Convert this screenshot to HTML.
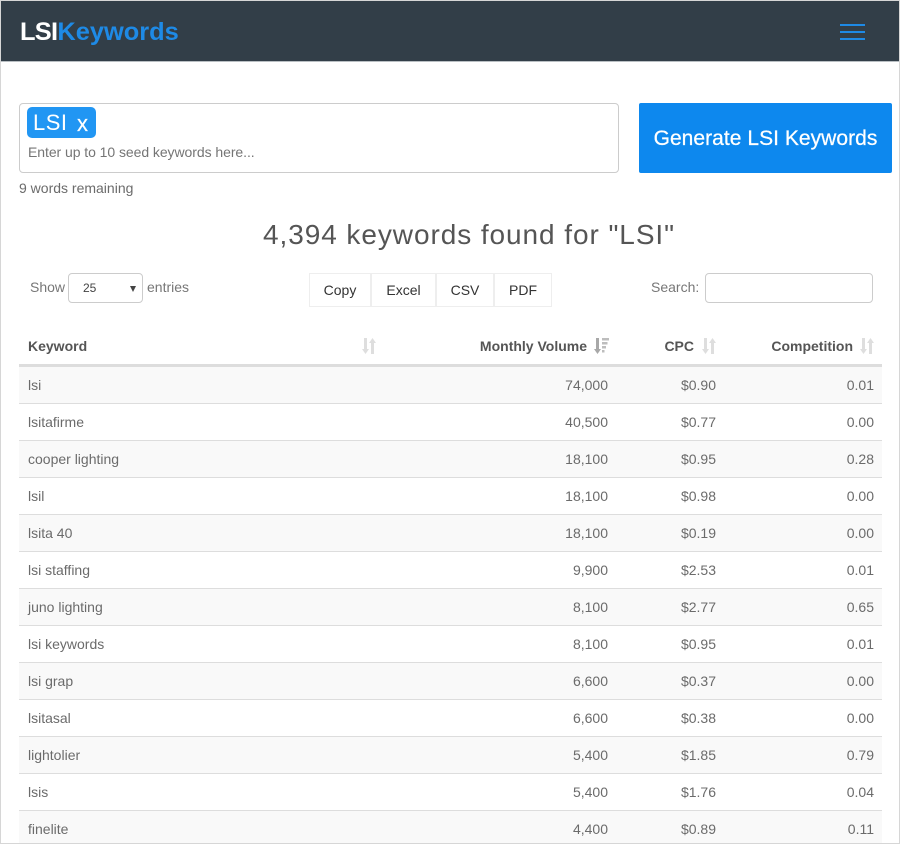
<!DOCTYPE html>
<html>
<head>
<meta charset="utf-8">
<title>LSIKeywords</title>
<style>
*{box-sizing:border-box}
html,body{margin:0;padding:0;background:#fff;width:900px;height:844px;overflow:hidden}
#page{position:relative;width:900px;height:844px;overflow:hidden;font-family:"Liberation Sans",sans-serif;font-size:14px;color:#6b6b6b}
.a{position:absolute;white-space:nowrap}
#frame{position:absolute;left:0;top:0;width:900px;height:844px;border:1px solid #d6d6d6;pointer-events:none;z-index:5}
#nav{position:absolute;left:1px;top:1px;width:898px;height:60px;background:#323e48}
#navline{position:absolute;left:1px;top:61px;width:898px;height:1px;background:#b9bfc3}
.bar{position:absolute;left:840px;width:25px;height:2px;background:#1e8ae6}
#input{position:absolute;left:19px;top:103px;width:600px;height:70px;border:1px solid #ccc;border-radius:4px}
#tag{position:absolute;left:27px;top:107px;width:69px;height:31px;background:#2196f3;border-radius:5px;color:#fff;font-size:22px;line-height:31px}
#btn{position:absolute;left:639px;top:103px;width:253px;height:70px;background:#0d88ee;border-radius:2px;color:#fff;font-size:21px;line-height:71px;text-align:center;letter-spacing:.04px;-webkit-text-stroke:.25px #fff}
#sel{position:absolute;left:68px;top:273px;width:75px;height:30px;border:1px solid #ccc;border-radius:4px;color:#444;font-size:12px;line-height:28px;padding-left:14px}
#sel:after{content:"";position:absolute;left:61px;top:12px;border-left:3.5px solid transparent;border-right:3.5px solid transparent;border-top:6px solid #444}
#search{position:absolute;left:705px;top:273px;width:168px;height:30px;border:1px solid #ccc;border-radius:4px}
.b{position:absolute;top:273px;height:34px;border:1px solid #eee;line-height:33px;text-align:center;color:#333;font-size:14px;background:#fff}
.th{position:absolute;top:338px;font-weight:bold;color:#555;line-height:16px;white-space:nowrap}
.ic{position:absolute;top:338px}
.row{position:absolute;left:19px;width:863px;height:37px;border-bottom:1px solid #ddd;line-height:36px}
.row.o{background:#f9f9f9}
.row span{position:absolute;top:0;white-space:nowrap}
.k{left:9px}
.v{right:274px}
.c{right:166px}
.m{right:8px}
</style>
</head>
<body>
<div id="page">
<div id="nav"></div>
<div id="navline"></div>
<div class="a" style="left:20px;top:16px;font-size:25.4px;line-height:32px;font-weight:bold;color:#fff"><span style="letter-spacing:-.7px">LSI</span><span style="color:#1e8ae6">Keywords</span></div>
<div class="bar" style="top:24px"></div>
<div class="bar" style="top:31px"></div>
<div class="bar" style="top:38px"></div>

<div id="input"></div>
<div id="tag"><span class="a" style="left:6px;top:0;letter-spacing:.5px">LSI</span><span class="a" style="left:50px;top:1px;-webkit-text-stroke:.2px #fff">x</span></div>
<div class="a" style="left:28px;top:144px;line-height:16px;color:#757575;letter-spacing:-.06px">Enter up to 10 seed keywords here...</div>
<div class="a" style="left:19px;top:180px;line-height:16px">9 words remaining</div>
<div id="btn">Generate LSI Keywords</div>

<div class="a" style="left:263px;top:219px;font-size:28px;line-height:32px;color:#555;letter-spacing:.93px">4,394 keywords found for "LSI"</div>

<div class="a" style="left:30px;top:279px;line-height:16px;color:#777">Show</div>
<div id="sel">25</div>
<div class="a" style="left:147px;top:279px;line-height:16px;color:#777">entries</div>

<div class="b" style="left:309px;width:62px">Copy</div>
<div class="b" style="left:371px;width:65px">Excel</div>
<div class="b" style="left:436px;width:58px">CSV</div>
<div class="b" style="left:494px;width:58px">PDF</div>

<div class="a" style="left:651px;top:279px;line-height:16px;color:#777">Search:</div>
<div id="search"></div>

<div class="th" style="left:28px">Keyword</div>
<div class="th" style="right:313px">Monthly Volume</div>
<div class="th" style="right:206px">CPC</div>
<div class="th" style="right:47px">Competition</div>

<svg class="ic" style="left:361px" width="16" height="16" viewBox="0 0 16 16"><path d="M3 0h3v11h2l-3.500 5L1 11h2zM10 16h3V5h2L11.500 0 8 5h2z" fill="#dedede"/></svg>
<svg class="ic" style="left:593px" width="17" height="16" viewBox="0 0 17 16"><path d="M3 0h3v11h2l-3.500 5L1 11h2z" fill="#a8a8a8"/><path d="M9 0h7v2.500H9zM9 4h5.500v2.500H9zM9 8h4v2.500H9zM9 12h2.500v2.500H9z" fill="#bdbdbd"/></svg>
<svg class="ic" style="left:701px" width="16" height="16" viewBox="0 0 16 16"><path d="M3 0h3v11h2l-3.500 5L1 11h2zM10 16h3V5h2L11.500 0 8 5h2z" fill="#dedede"/></svg>
<svg class="ic" style="left:859px" width="16" height="16" viewBox="0 0 16 16"><path d="M3 0h3v11h2l-3.500 5L1 11h2zM10 16h3V5h2L11.500 0 8 5h2z" fill="#dedede"/></svg>

<div class="a" style="left:19px;top:364px;width:863px;height:3px;background:#ddd"></div>

<div class="row o" style="top:367px"><span class="k">lsi</span><span class="v">74,000</span><span class="c">$0.90</span><span class="m">0.01</span></div>
<div class="row" style="top:404px"><span class="k">lsitafirme</span><span class="v">40,500</span><span class="c">$0.77</span><span class="m">0.00</span></div>
<div class="row o" style="top:441px"><span class="k">cooper lighting</span><span class="v">18,100</span><span class="c">$0.95</span><span class="m">0.28</span></div>
<div class="row" style="top:478px"><span class="k">lsil</span><span class="v">18,100</span><span class="c">$0.98</span><span class="m">0.00</span></div>
<div class="row o" style="top:515px"><span class="k">lsita 40</span><span class="v">18,100</span><span class="c">$0.19</span><span class="m">0.00</span></div>
<div class="row" style="top:552px"><span class="k">lsi staffing</span><span class="v">9,900</span><span class="c">$2.53</span><span class="m">0.01</span></div>
<div class="row o" style="top:589px"><span class="k">juno lighting</span><span class="v">8,100</span><span class="c">$2.77</span><span class="m">0.65</span></div>
<div class="row" style="top:626px"><span class="k">lsi keywords</span><span class="v">8,100</span><span class="c">$0.95</span><span class="m">0.01</span></div>
<div class="row o" style="top:663px"><span class="k">lsi grap</span><span class="v">6,600</span><span class="c">$0.37</span><span class="m">0.00</span></div>
<div class="row" style="top:700px"><span class="k">lsitasal</span><span class="v">6,600</span><span class="c">$0.38</span><span class="m">0.00</span></div>
<div class="row o" style="top:737px"><span class="k">lightolier</span><span class="v">5,400</span><span class="c">$1.85</span><span class="m">0.79</span></div>
<div class="row" style="top:774px"><span class="k">lsis</span><span class="v">5,400</span><span class="c">$1.76</span><span class="m">0.04</span></div>
<div class="row o" style="top:811px;height:32px;border-bottom:0"><span class="k">finelite</span><span class="v">4,400</span><span class="c">$0.89</span><span class="m">0.11</span></div>

<div id="frame"></div>
</div>
</body>
</html>
